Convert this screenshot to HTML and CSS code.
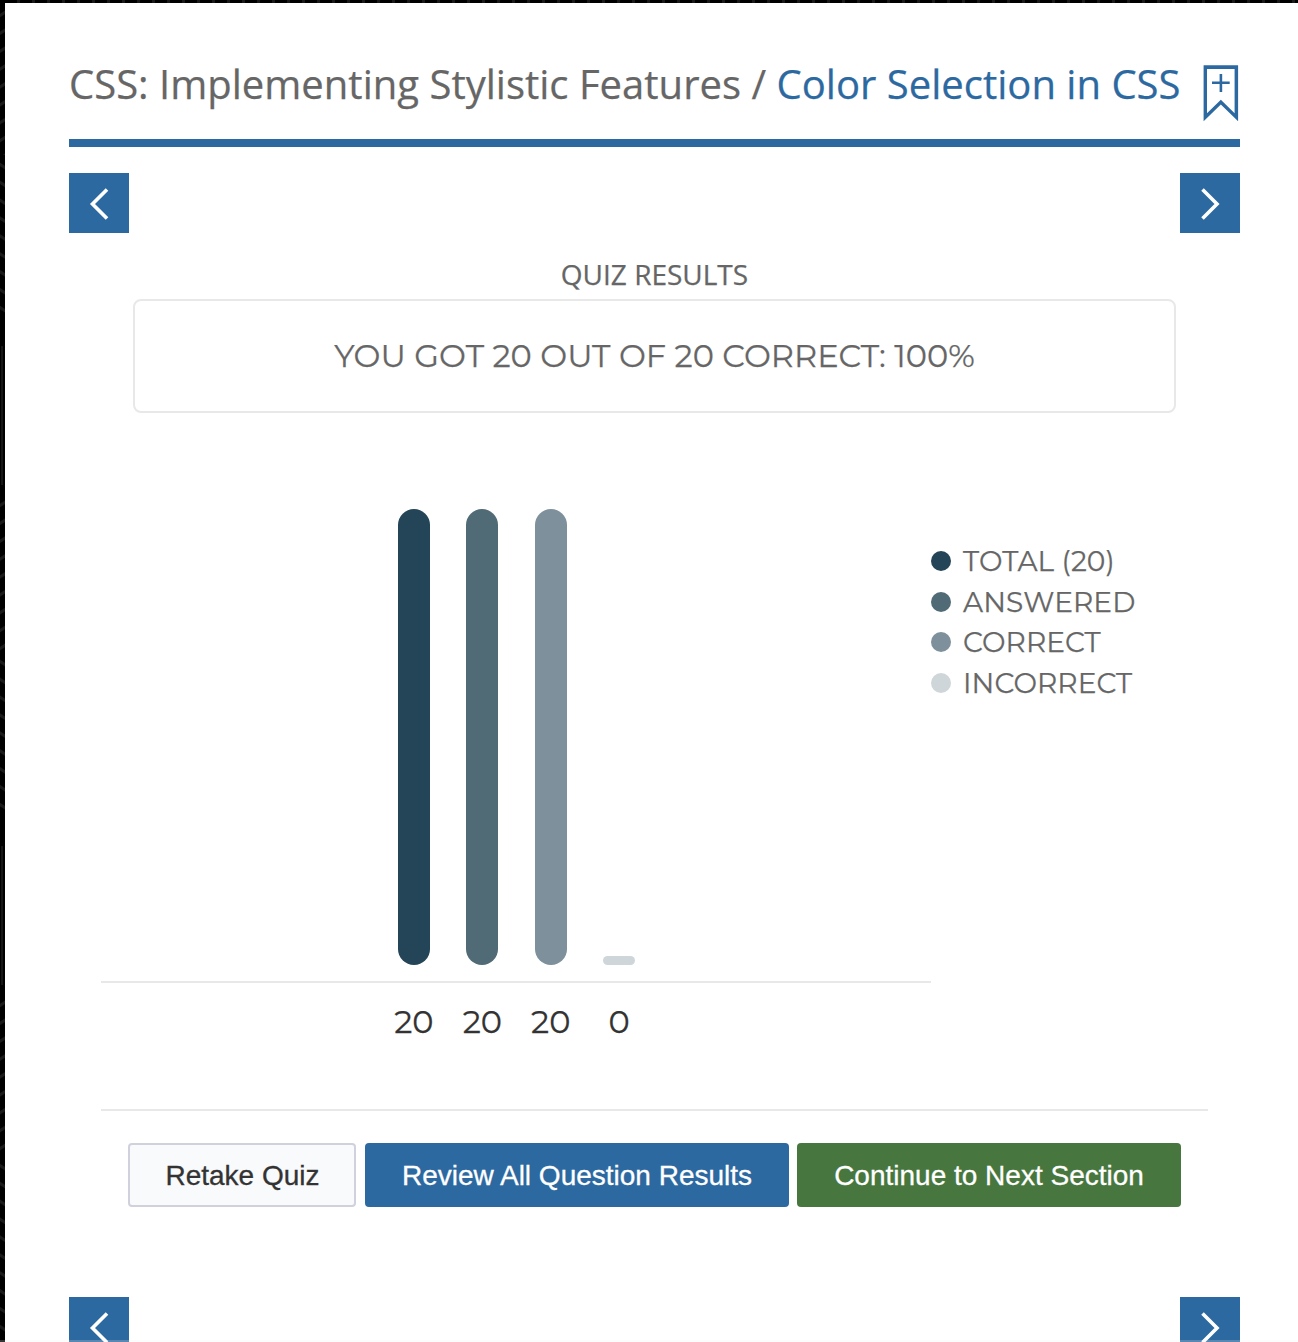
FILE: index.html
```html
<!DOCTYPE html>
<html lang="en">
<head>
<meta charset="utf-8">
<title>Quiz Results</title>
<link rel="stylesheet" href="styles.css">
</head>
<body>
<main class="page">
  <header class="header">
    <h1 class="title"><span class="course">CSS: Implementing Stylistic Features /</span> <a class="lesson">Color Selection in CSS</a></h1>
    <svg class="bookmark" width="36" height="58" viewBox="0 0 36 58" fill="currentColor" fill-rule="evenodd"><path d="M.6 1.300H35.100V57.300L17.850 40.500L.6 57.300ZM4 4.900V49.300L17.850 35.700L31.600 49.300V4.900Z"/><path d="M16.600 10H19.200V17.500H26.700V20.100H19.200V28H16.600V20.100H9V17.500H16.600Z"/></svg>
  </header>
  <nav class="pager">
    <a class="arrow"><svg width="60" height="60" viewBox="0 0 60 60"><path d="M38 16.500L23.500 31L38 45.500"/></svg></a>
    <a class="arrow"><svg width="60" height="60" viewBox="0 0 60 60"><path d="M22.500 16.500L37 31L22.500 45.500"/></svg></a>
  </nav>
  <h2 class="subtitle">QUIZ RESULTS</h2>
  <div class="score"><span>YOU GOT 20 OUT OF 20 CORRECT: 100%</span></div>
  <section class="results">
    <div class="chart">
      <div class="bars">
        <div class="bar total"></div><div class="bar answered"></div><div class="bar correct"></div><div class="bar incorrect empty"></div>
      </div>
      <div class="values"><span>20</span><span>20</span><span>20</span><span>0</span></div>
    </div>
    <ul class="legend">
      <li><i class="dot total"></i><span>TOTAL (20)</span></li>
      <li><i class="dot answered"></i><span>ANSWERED</span></li>
      <li><i class="dot correct"></i><span>CORRECT</span></li>
      <li><i class="dot incorrect"></i><span>INCORRECT</span></li>
    </ul>
  </section>
  <div class="actions">
    <button class="btn retake">Retake Quiz</button>
    <button class="btn review">Review All Question Results</button>
    <button class="btn continue">Continue to Next Section</button>
  </div>
  <nav class="pager bottom">
    <a class="arrow"><svg width="60" height="60" viewBox="0 0 60 60"><path d="M38 16.500L23.500 31L38 45.500"/></svg></a>
    <a class="arrow"><svg width="60" height="60" viewBox="0 0 60 60"><path d="M22.500 16.500L37 31L22.500 45.500"/></svg></a>
  </nav>
</main>
</body>
</html>
```
FILE: styles.css
```css
* { box-sizing: border-box; }
html { height: 1342px; overflow: hidden; }
body {
  --rise: repeating-linear-gradient(147deg, #000 0 11px, #1a1a1a 12px 14px, #000 15px);
  --fall: repeating-linear-gradient(33deg, #000 0 11px, #1a1a1a 12px 14px, #000 15px);
  --post: linear-gradient(#161616, #161616);
  margin: 0;
  height: 1342px;
  overflow: hidden;
  padding: 3px 0 0 5px;
  background-color: #000;
  background-image: var(--rise), var(--fall), var(--post), var(--rise), var(--fall), var(--post), var(--rise), var(--fall),
    repeating-linear-gradient(90deg, #000 0 12px, #1a1a1a 12px 15px);
  background-size: 5px 155px, 5px 165px, 2px 139px, 5px 165px, 5px 165px, 2px 139px, 5px 165px, 5px 187px, 1298px 3px;
  background-position: 0 0, 0 158px, 1px 346px, 0 490px, 0 655px, 1px 846px, 0 990px, 0 1155px, 5px 0;
  background-repeat: no-repeat;
  font-family: "Open Sans", sans-serif;
  color: #666;
  -webkit-text-stroke: 0.25px;
}
/* translucent edge along the bottom of the window */
body::after {
  content: "";
  position: absolute;
  left: 0;
  right: 0;
  top: 1340px;
  height: 2px;
  background: rgba(240, 240, 240, 0.22);
}
.page { height: 1400px; background: #fff; padding: 0 58px 0 64px; }
.header {
  display: flex;
  justify-content: space-between;
  height: 144px;
  padding-top: 54px;
  border-bottom: 8px solid #2d69a1;
}
.title { margin: 0; font-size: 40px; line-height: 54px; font-weight: 400; letter-spacing: 0.012px; white-space: nowrap; }
.lesson, .bookmark { color: #2d69a1; }
.bookmark { margin: 7px 1px 0 0; flex: none; }
.pager { display: flex; justify-content: space-between; margin-top: 26px; }
.arrow { width: 60px; height: 60px; background: #2d69a1; }
.arrow svg { display: block; fill: none; stroke: #fff; stroke-width: 3.6; }
.subtitle { margin: 22px 0 0; height: 44px; font-size: 28px; line-height: 38px; font-weight: 400; text-align: center; }
.score {
  margin: 0 64px;
  height: 114px;
  padding-bottom: 2px;
  border: 2px solid #e8e8e8;
  border-radius: 8px;
  display: flex;
  align-items: center;
  justify-content: center;
  font: 32px "Montserrat", "Lato", sans-serif;
  letter-spacing: 0.04px;
  white-space: nowrap;
}
.results {
  display: flex;
  height: 698px;
  margin: 0 32px;
  padding-top: 96px;
  border-bottom: 2px solid #e8e8e8;
}
.chart { width: 830px; }
.bars {
  display: flex;
  align-items: flex-end;
  justify-content: center;
  gap: 36.4px;
  height: 474px;
  padding: 0 0 16px 1px;
  border-bottom: 2px solid #e8e8e8;
}
.bar { width: 32px; height: 456px; border-radius: 16px; }
.empty { height: 9px; }
.total { background: #244558; }
.answered { background: #506b76; }
.correct { background: #7d909b; }
.incorrect { background: #cfd6da; }
.values {
  display: flex;
  justify-content: center;
  margin-top: 19px;
  padding-left: 1px;
  color: #333;
  font: 32px/40px "Montserrat", "Lato", sans-serif;
}
.values span { width: 68.4px; text-align: center; }
.legend { list-style: none; margin: 32px 0 0; padding: 0; font: 28px/40.6px "Montserrat", "Lato", sans-serif; letter-spacing: 0.1px; }
.legend li { display: flex; align-items: center; height: 40.6px; white-space: nowrap; }
.dot { width: 20px; height: 20px; border-radius: 50%; margin-right: 12px; }
.actions { display: flex; margin: 32px 59px 0; height: 64px; }
.btn {
  border: 0;
  border-radius: 4px;
  padding: 2px 0 0;
  color: #fff;
  font: 28px "Liberation Sans", Arial, sans-serif;
  white-space: nowrap;
  -webkit-text-stroke: 0.3px;
}
.retake { width: 228px; color: #333; background: #f9fafc; border: 2px solid #d0d1dd; margin-right: 9px; padding-left: 1px; }
.review { width: 424px; background: #2d69a1; margin-right: 8px; }
.continue { width: 384px; background: #47773e; }
.bottom { margin-top: 90px; }
```
